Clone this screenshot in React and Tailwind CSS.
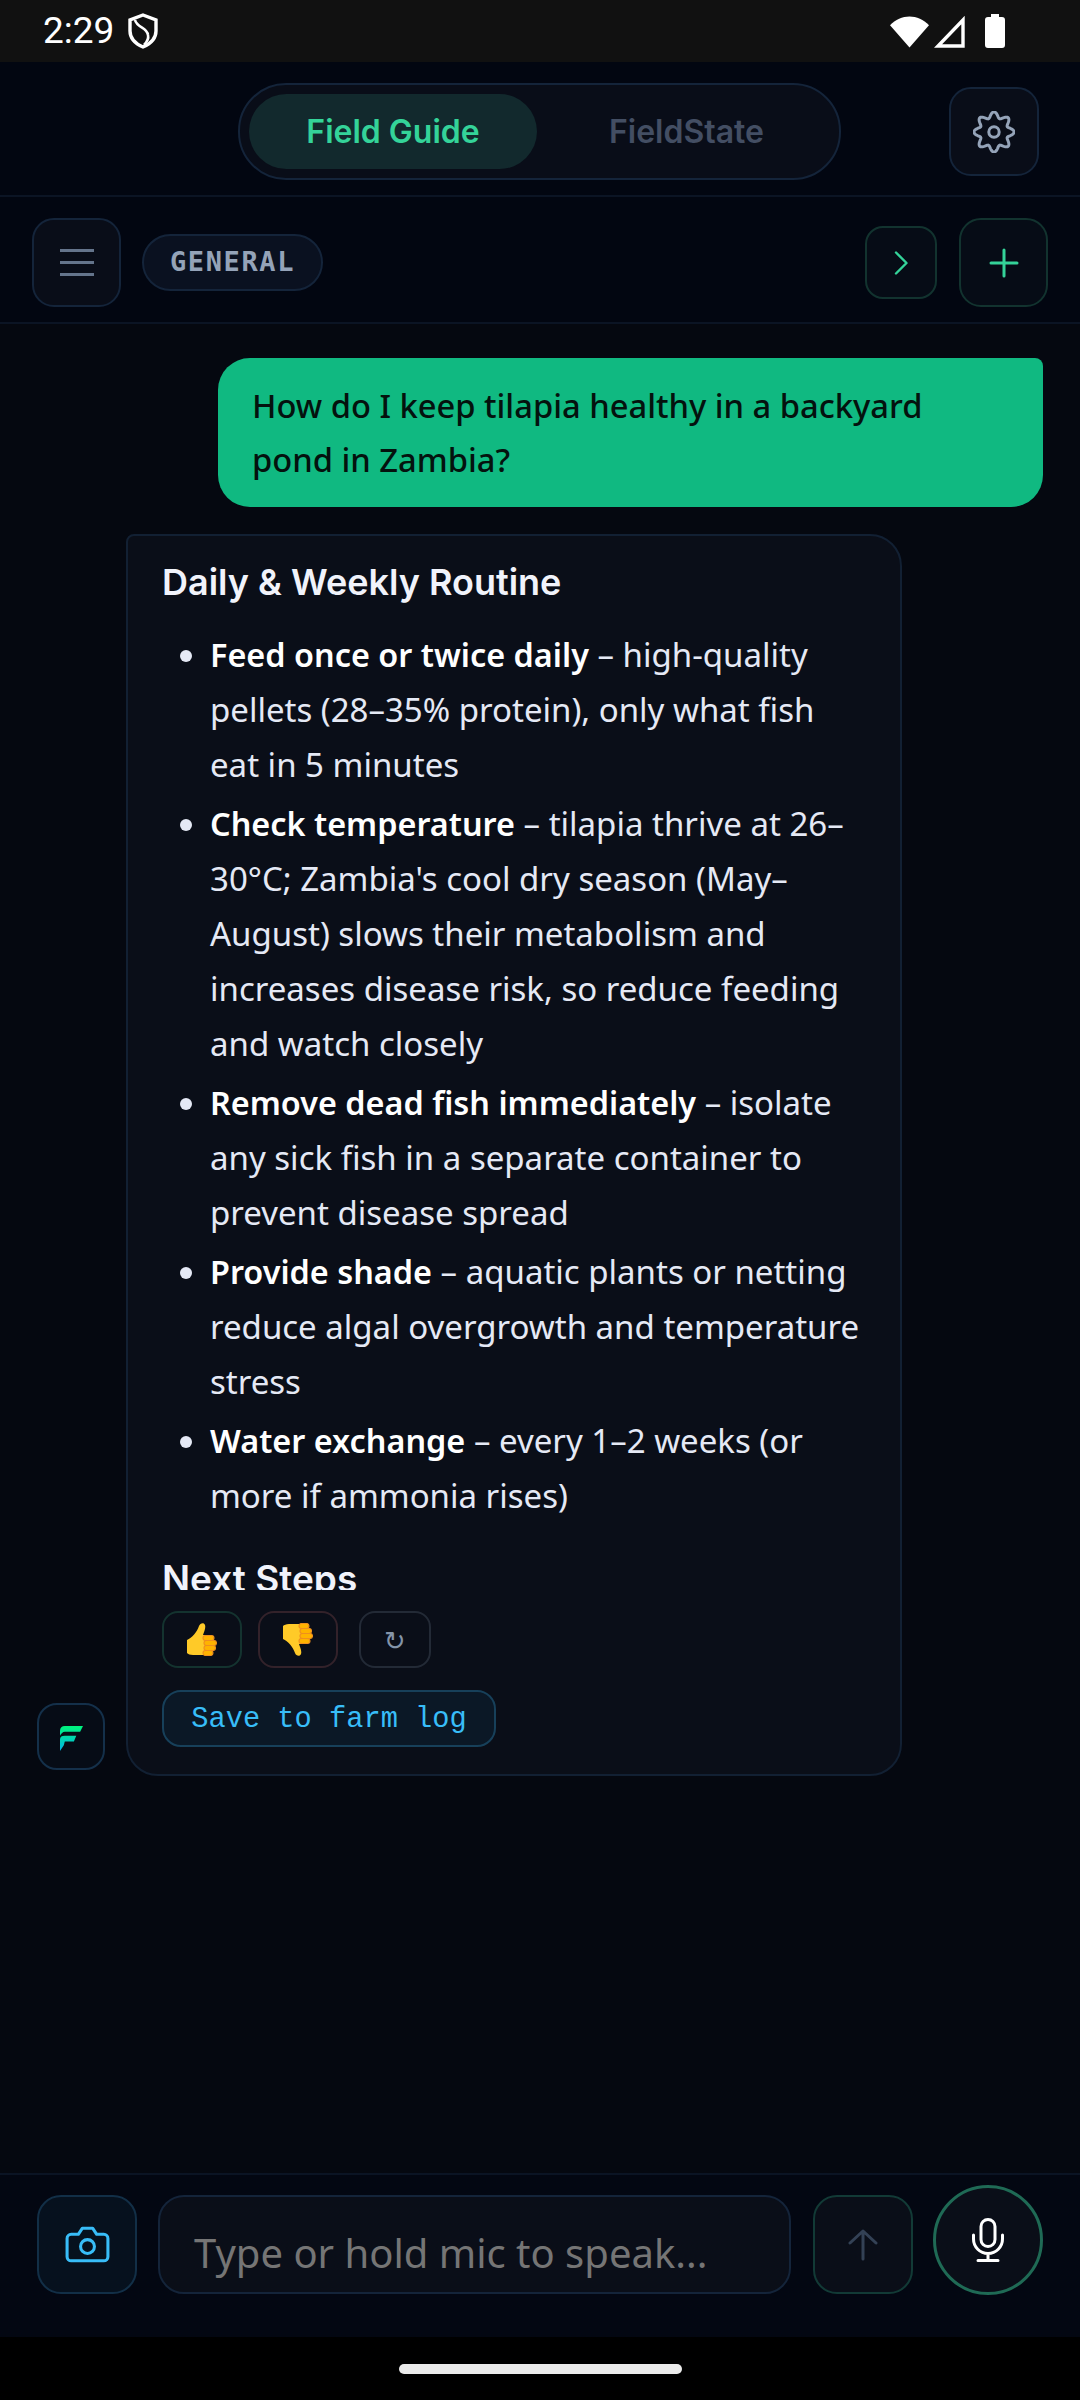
const sans = '"Noto Sans", "Open Sans", sans-serif';
const head = 'Inter, sans-serif';

const gearPath = (() => {
  const pts = [];
  for (let i = 0; i < 240; i++) {
    const t = (i / 240) * Math.PI * 2;
    const r = 17.2 + 2.9 * Math.cos(8 * t);
    pts.push(`${(21 + r * Math.sin(t)).toFixed(2)} ${(21 - r * Math.cos(t)).toFixed(2)}`);
  }
  return `M${pts.join('L')}Z`;
})();

function Thumb({ down }) {
  return (
    <svg width="30" height="33" viewBox="0 0 30 33" style={{ transform: down ? 'scaleY(-1)' : undefined }}>
      <path d="M0 17C5 15 10 9 12 3C13 0 17-1 18 2C19 5 17 9 16 12H24V32H6C3 32 1 31 0 30Z" fill="#FFCA28" />
      <g fill="#FFB300" stroke="#EF8F1E" strokeWidth="1.1">
        <rect x="16" y="12.5" width="11" height="5" rx="2.4" />
        <rect x="17" y="17.5" width="12.5" height="5" rx="2.4" />
        <rect x="17" y="22.5" width="11.5" height="5" rx="2.4" />
        <rect x="16" y="27.5" width="10" height="5" rx="2.4" />
      </g>
    </svg>
  );
}

function Li({ b, children }) {
  return (
    <li className="mb-[4px] text-[#e5e9f5]">
      <b className="font-semibold text-white text-[32.4px]">{b}</b> {children}
    </li>
  );
}

export default function App() {
  return (
    <div className="w-[1080px] h-[2400px] flex flex-col bg-[#050810] overflow-hidden" style={{ fontFamily: sans }}>
      <div className="h-[62px] shrink-0 bg-[#111111] flex items-center pl-[43px] pr-[75px] text-white">
        <span className="text-[37px] font-normal" style={{ fontFamily: 'Roboto, sans-serif' }}>2:29</span>
        <svg width="32" height="36" viewBox="0 0 32 36" className="ml-[13px]" fill="none" stroke="#fff" strokeWidth="3.4">
          <path d="M16 2 L29 7 V18 C29 26 23 31 16 34 C9 31 3 26 3 18 V7 Z" />
          <path d="M8 7 C10 15 20 14 21 22 C22 26 20 29 17 32" strokeWidth="2.6" />
        </svg>
        <div className="ml-auto flex items-center">
          <svg width="39" height="33" viewBox="0 0 40 33"><path d="M0 10 C11 -2 29 -2 40 10 L20 33 Z" fill="#fff" /></svg>
          <svg width="33" height="33" viewBox="0 0 33 33" className="ml-[4px]" fill="none" stroke="#fff" strokeWidth="3.4"><path d="M30 5 V31 H5 Z" /></svg>
          <svg width="20" height="34" viewBox="0 0 20 34" className="ml-[19px]"><path d="M6 0h8v3h3c2 0 3 1 3 3v25c0 2-1 3-3 3H3c-2 0-3-1-3-3V6c0-2 1-3 3-3h3z" fill="#fff" /></svg>
        </div>
      </div>

      <div className="h-[135px] shrink-0 bg-[#020611] border-b-2 border-[#0b1424] pt-[6px] flex items-center">
        <div className="ml-[238px] w-[603px] h-[97px] rounded-[48px] border-2 border-[#14243a] bg-[#090d18] p-[9px] flex text-[32px] font-semibold" style={{ fontFamily: head }}>
          <div className="w-[288px] rounded-[38px] bg-[#12292d] text-[#34d399] flex items-center justify-center">Field Guide</div>
          <div className="flex-1 pl-[6px] text-[#434e63] flex items-center justify-center">FieldState</div>
        </div>
        <div className="ml-[108px] w-[90px] h-[89px] rounded-[22px] border-2 border-[#14243a] bg-[#090d18] flex items-center justify-center">
          <svg width="42" height="42" viewBox="0 0 42 42" fill="none" stroke="#94a3b8" strokeWidth="3" strokeLinejoin="round">
            <path d={gearPath} />
            <circle cx="21" cy="21" r="5.2" />
          </svg>
        </div>
      </div>

      <div className="h-[127px] shrink-0 bg-[#020611] border-b-2 border-[#0b1424] pt-[6px] flex items-center pl-[32px] pr-[32px]">
        <div className="w-[89px] h-[89px] rounded-[22px] border-2 border-[#14243a] bg-[#090d18] flex flex-col items-center justify-center gap-[9px]">
          <div className="w-[34px] h-[3px] bg-[#64748b]" />
          <div className="w-[34px] h-[3px] bg-[#64748b]" />
          <div className="w-[34px] h-[3px] bg-[#64748b]" />
        </div>
        <div className="ml-[21px] w-[181px] h-[57px] rounded-[29px] border-2 border-[#14243a] bg-[#0a1120] flex items-center justify-center text-[#94a3b8] text-[27px] font-bold tracking-[1.6px]" style={{ fontFamily: '"DejaVu Sans Mono", monospace' }}>GENERAL</div>
        <div className="ml-auto w-[72px] h-[73px] rounded-[18px] border-2 border-[#12332f] bg-[#060c16] flex items-center justify-center">
          <svg width="28" height="28" viewBox="0 0 28 28" fill="none" stroke="#34d399" strokeWidth="2.4"><path d="M9 3.5 L19.5 14 L9 24.5" strokeLinecap="round" strokeLinejoin="round" /></svg>
        </div>
        <div className="ml-[22px] w-[89px] h-[89px] rounded-[22px] border-2 border-[#12332f] bg-[#060c16] flex items-center justify-center">
          <svg width="32" height="32" viewBox="0 0 32 32" stroke="#34d399" strokeWidth="3" strokeLinecap="round"><path d="M16 3 V29 M3 16 H29" /></svg>
        </div>
      </div>

      <div className="flex-1 flex flex-col bg-[#050810]">
        <div className="mt-[34px] ml-[218px] w-[825px] h-[149px] rounded-[32px] rounded-tr-[8px] bg-[#10b981] text-[#04120e] px-[34px] pt-[21px] text-[32.7px] leading-[54px] font-medium">
          How do I keep tilapia healthy in a backyard pond in Zambia?
        </div>

        <div className="mt-[27px] ml-[37px] flex items-end gap-[21px]">
          <div className="mb-[6px] w-[68px] h-[67px] rounded-[20px] border-2 border-[#14304a] bg-[#060c16] flex items-center justify-center pt-[3px]">
            <svg width="23" height="27" viewBox="0 0 24 28">
              <defs>
                <linearGradient id="fg" x1="0" y1="0" x2="0" y2="1">
                  <stop offset="0" stopColor="#00f57a" />
                  <stop offset="1" stopColor="#00b4e8" />
                </linearGradient>
              </defs>
              <path d="M5 1 H24 L21 7 H5 C3 7 1 9 0 11 V6 C0 3 2 1 5 1 Z M5 11 H17 L14.5 17 H5 L4 21 L0 27 V15 C0 12 2 11 5 11 Z" fill="url(#fg)" />
            </svg>
          </div>

          <div className="w-[776px] h-[1242px] rounded-[32px] rounded-tl-[8px] border-2 border-[#122033] bg-[#0a0e18] pl-[34px] pr-[29px] pt-[24px] flex flex-col">
            <div className="h-[1030px] shrink-0 overflow-hidden">
              <h3 className="text-[36px] leading-[44px] font-semibold text-[#f1f3fb] m-0" style={{ fontFamily: head }}>Daily &amp; Weekly Routine</h3>
              <ul className="mt-[23px] ml-[48px] list-disc text-[33px] leading-[55px] marker:text-[#e5e9f5]">
                <Li b="Feed once or twice daily">– high-quality pellets (28–35% protein), only what fish eat in 5 minutes</Li>
                <Li b="Check temperature">– tilapia thrive at 26–30°C; Zambia's cool dry season (May–August) slows their metabolism and increases disease risk, so reduce feeding and watch closely</Li>
                <Li b="Remove dead fish immediately">– isolate any sick fish in a separate container to prevent disease spread</Li>
                <Li b="Provide shade">– aquatic plants or netting reduce algal overgrowth and temperature stress</Li>
                <Li b="Water exchange">– every 1–2 weeks (or more if ammonia rises)</Li>
              </ul>
              <h3 className="mt-[34px] text-[37px] leading-[44px] font-semibold text-[#f1f3fb]" style={{ fontFamily: head }}>Next Steps</h3>
            </div>
            <div className="mt-[21px] flex">
              <div className="w-[80px] h-[57px] rounded-[16px] border-2 border-[#14332f] flex items-center justify-center"><Thumb /></div>
              <div className="ml-[16px] w-[80px] h-[57px] rounded-[16px] border-2 border-[#33222a] flex items-center justify-center"><Thumb down /></div>
              <div className="ml-[21px] w-[72px] h-[57px] rounded-[16px] border-2 border-[#232a36] flex items-center justify-center text-[#8494a8] text-[26px] pt-[4px]" style={{ fontFamily: '"DejaVu Sans", sans-serif' }}>↻</div>
            </div>
            <div className="mt-[22px] w-[334px] h-[57px] pt-[3px] rounded-[19px] border-2 border-[#17405a] bg-[#0b1826] text-[#38bdf8] text-[28.7px] flex items-center justify-center" style={{ fontFamily: '"Liberation Mono", monospace' }}>Save to farm log</div>
          </div>
        </div>
      </div>

      <div className="h-[164px] shrink-0 bg-[#030712] border-t-2 border-[#0b1424] flex items-start pl-[37px] pt-[10px]">
        <div className="mt-[10px] w-[100px] h-[99px] rounded-[24px] border-2 border-[#122f47] bg-[#06111e] flex items-center justify-center">
          <svg width="49" height="49" viewBox="0 0 24 24" fill="none" stroke="#38bdf8" strokeWidth="1.5" strokeLinecap="round" strokeLinejoin="round">
            <path d="M14.5 4h-5L7.5 7H4a2 2 0 0 0-2 2v9a2 2 0 0 0 2 2h16a2 2 0 0 0 2-2V9a2 2 0 0 0-2-2h-3.5l-2-3z" />
            <circle cx="12" cy="13" r="3.4" />
          </svg>
        </div>
        <div className="mt-[10px] ml-[21px] w-[633px] h-[99px] rounded-[26px] border-2 border-[#14243a] bg-[#0a0e18] pl-[34px] pt-[21px] text-[#757575] text-[40px] leading-[70px]">Type or hold mic to speak...</div>
        <div className="mt-[10px] ml-[22px] w-[100px] h-[99px] rounded-[24px] border-2 border-[#123a36] bg-[#0a0e18] flex items-center justify-center">
          <svg width="30" height="33" viewBox="0 0 30 33" fill="none" stroke="#334155" strokeWidth="3" strokeLinecap="round" strokeLinejoin="round"><path d="M15 31 V3 M2 15 L15 3 L28 15" /></svg>
        </div>
        <div className="ml-[20px] w-[110px] h-[110px] rounded-full border-[3px] border-[#1f6a55] bg-[#0a0e18] flex items-center justify-center">
          <svg width="32" height="44" viewBox="0 0 32 44" fill="none" stroke="#fff" strokeWidth="3" strokeLinecap="round" strokeLinejoin="round">
            <rect x="9" y="1.5" width="14" height="27" rx="7" />
            <path d="M1.5 17v4a14.5 14.5 0 0 0 29 0v-4M16 36v6M6 42.5h20" />
          </svg>
        </div>
      </div>

      <div className="h-[63px] shrink-0 bg-black flex justify-center pt-[27px]">
        <div className="w-[283px] h-[10px] rounded-full bg-[#ebebeb]" />
      </div>
    </div>
  );
}
